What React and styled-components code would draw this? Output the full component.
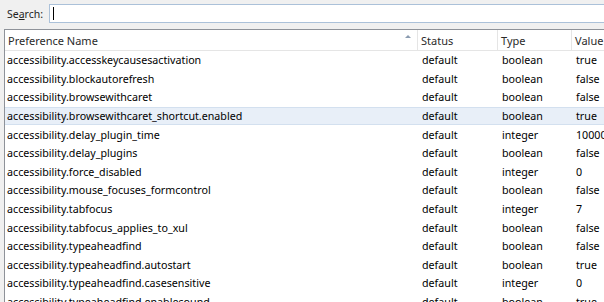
import React from 'react'
import styled, { createGlobalStyle } from 'styled-components'

const Global = createGlobalStyle`
  html, body { margin: 0; padding: 0; background: #fff; }
  body { font-family: "Noto Sans", "Open Sans", sans-serif; font-size: 10.7px; color: #000; overflow: hidden; }
`

const prefs = [
  ['accessibility.accesskeycausesactivation', 'default', 'boolean', 'true'],
  ['accessibility.blockautorefresh', 'default', 'boolean', 'false'],
  ['accessibility.browsewithcaret', 'default', 'boolean', 'false'],
  ['accessibility.browsewithcaret_shortcut.enabled', 'default', 'boolean', 'true'],
  ['accessibility.delay_plugin_time', 'default', 'integer', '10000'],
  ['accessibility.delay_plugins', 'default', 'boolean', 'false'],
  ['accessibility.force_disabled', 'default', 'integer', '0'],
  ['accessibility.mouse_focuses_formcontrol', 'default', 'boolean', 'false'],
  ['accessibility.tabfocus', 'default', 'integer', '7'],
  ['accessibility.tabfocus_applies_to_xul', 'default', 'boolean', 'false'],
  ['accessibility.typeaheadfind', 'default', 'boolean', 'false'],
  ['accessibility.typeaheadfind.autostart', 'default', 'boolean', 'true'],
  ['accessibility.typeaheadfind.casesensitive', 'default', 'integer', '0'],
  ['accessibility.typeaheadfind.enablesound', 'default', 'boolean', 'true'],
]

const Page = styled.div`
  width: 604px;
  height: 302px;
  background: #f0f0f0;
  display: flex;
  flex-direction: column;
`

const Toolbar = styled.div`
  height: 29px;
  display: flex;
  align-items: center;
  padding-left: 7px;
  gap: 6px;
  box-sizing: border-box;
  padding-bottom: 2px;
`

const Label = styled.label`
  font-size: 10.5px;
  color: #1e1e1e;
  u { text-decoration: underline; }
`

const Input = styled.div`
  flex: 1;
  height: 19px;
  box-sizing: border-box;
  background: #fff;
  border: 1px solid #abc1d9;
  border-right: none;
  display: flex;
  align-items: center;
  padding-left: 3px;
`

const Caret = styled.span`
  width: 1px;
  height: 13px;
  background: #000;
`

const Table = styled.div`
  flex: 1;
  margin-left: 4px;
  background: #fff;
  border-left: 1px solid #8e9299;
  border-top: 1px solid #8e9299;
  overflow: hidden;
`

const Grid = styled.div`
  display: grid;
  grid-template-columns: 413px 80px 74px 1fr;
`

const Header = styled(Grid)`
  height: 20px;
  border-bottom: 1px solid #e5e5e5;
  font-size: 11px;
`

const HeadCell = styled.div`
  display: flex;
  align-items: center;
  padding-left: ${p => p.$pad || 3}px;
  border-right: ${p => (p.$last ? 'none' : '1px solid #e5e5e5')};
  position: relative;
  color: #2a2a2a;
  white-space: nowrap;
`

const SortArrow = styled.span`
  position: absolute;
  right: 6px;
  top: 5px;
  width: 0;
  height: 0;
  border-left: 3px solid transparent;
  border-right: 3px solid transparent;
  border-bottom: 3px solid #8a9bb0;
`

const Row = styled(Grid)`
  height: 18.6px;
  align-items: center;
  box-sizing: border-box;
  background: ${p => (p.$selected ? '#e8eff8' : 'transparent')};
  border-top: 1px solid ${p => (p.$selected ? '#d3e0ef' : 'transparent')};
  border-bottom: 1px solid ${p => (p.$selected ? '#d3e0ef' : 'transparent')};
`

const Cell = styled.div`
  padding-left: ${p => p.$pad || 4}px;
  white-space: nowrap;
  line-height: 16px;
`

export default function App() {
  return (
    <Page>
      <Global />
      <Toolbar>
        <Label>Se<u>a</u>rch:</Label>
        <Input>
          <Caret />
        </Input>
      </Toolbar>
      <Table>
        <Header>
          <HeadCell $pad={3}>
            Preference Name
            <SortArrow />
          </HeadCell>
          <HeadCell>Status</HeadCell>
          <HeadCell>Type</HeadCell>
          <HeadCell $last>Value</HeadCell>
        </Header>
        {prefs.map((p, i) => (
          <Row key={i} $selected={i === 3}>
            <Cell $pad={2}>{p[0]}</Cell>
            <Cell>{p[1]}</Cell>
            <Cell>{p[2]}</Cell>
            <Cell>{p[3]}</Cell>
          </Row>
        ))}
      </Table>
    </Page>
  )
}
